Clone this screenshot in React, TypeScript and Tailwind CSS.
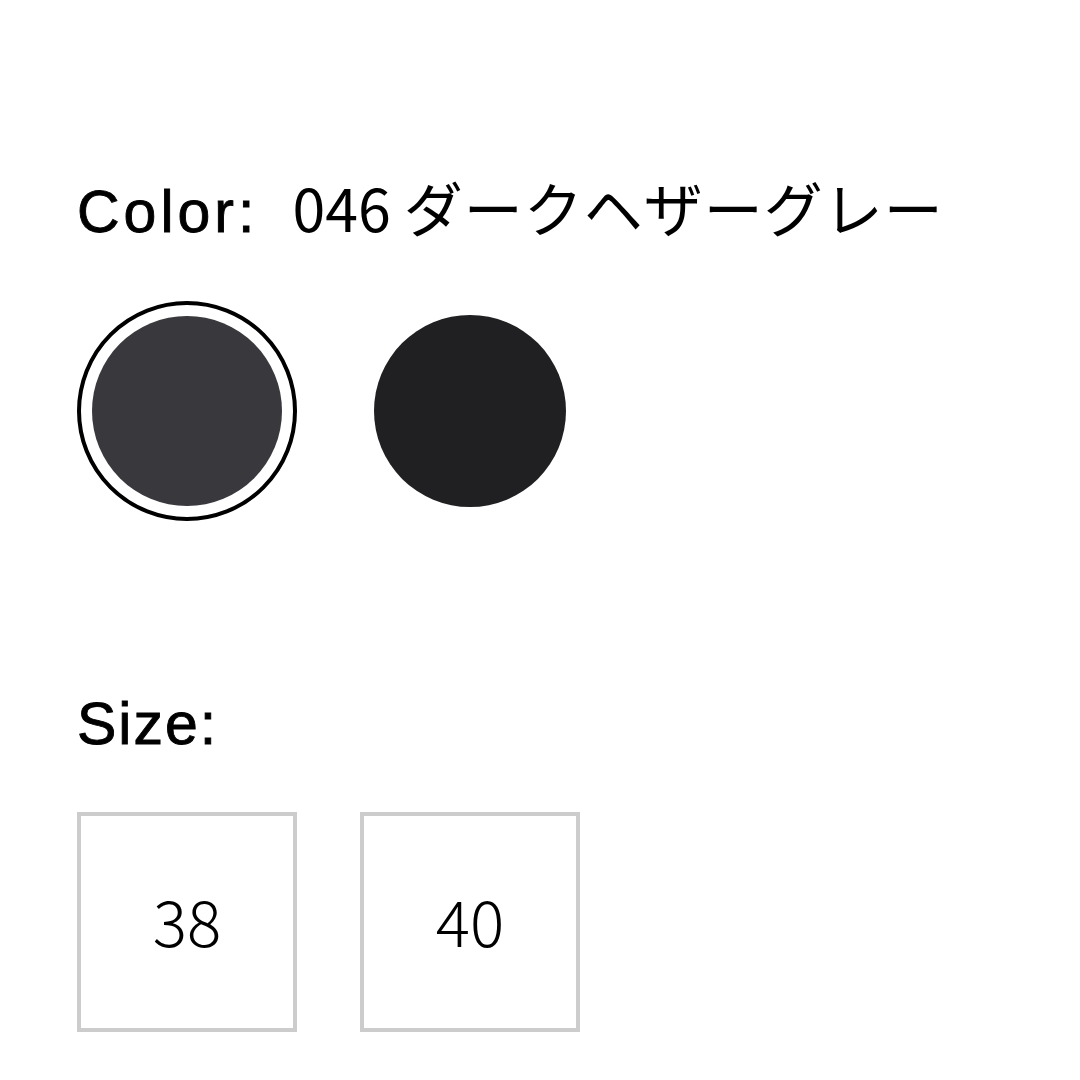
export default function App() {
  const sizes = ["38", "40"];

  return (
    <div className="h-[1080px] w-[1080px] bg-white pl-[77px] pt-[172px] text-black [font-family:'Noto_Sans_CJK_JP',sans-serif]">
      <div className="flex items-baseline text-[59px] leading-[70px]">
        <span className="tracking-[4px] [-webkit-text-stroke:0.9px_black] [font-family:'Liberation_Sans',sans-serif]">
          Color:
        </span>
        <span className="ml-[34px] font-normal">
          046 <span className="tracking-[1px]">ダークヘザーグレー</span>
        </span>
      </div>

      <div className="mt-[54px] flex items-center gap-[77px]">
        <div className="flex h-[220px] w-[220px] items-center justify-center rounded-full border-4 border-black">
          <div className="h-[190px] w-[190px] rounded-full bg-[#39383d]" />
        </div>
        <div className="h-[192px] w-[192px] rounded-full bg-[#202023]" />
      </div>

      <div className="mt-[168px] text-[59px] leading-[70px] tracking-[2px] [-webkit-text-stroke:0.9px_black] [font-family:'Liberation_Sans',sans-serif]">
        Size:
      </div>

      <div className="mt-[53px] flex gap-[63px]">
        {sizes.map((size) => (
          <div
            key={size}
            className="flex h-[220px] w-[220px] items-center justify-center border-4 border-[#cccccc] pb-[6px] text-[64px] font-light"
          >
            {size}
          </div>
        ))}
      </div>
    </div>
  );
}
